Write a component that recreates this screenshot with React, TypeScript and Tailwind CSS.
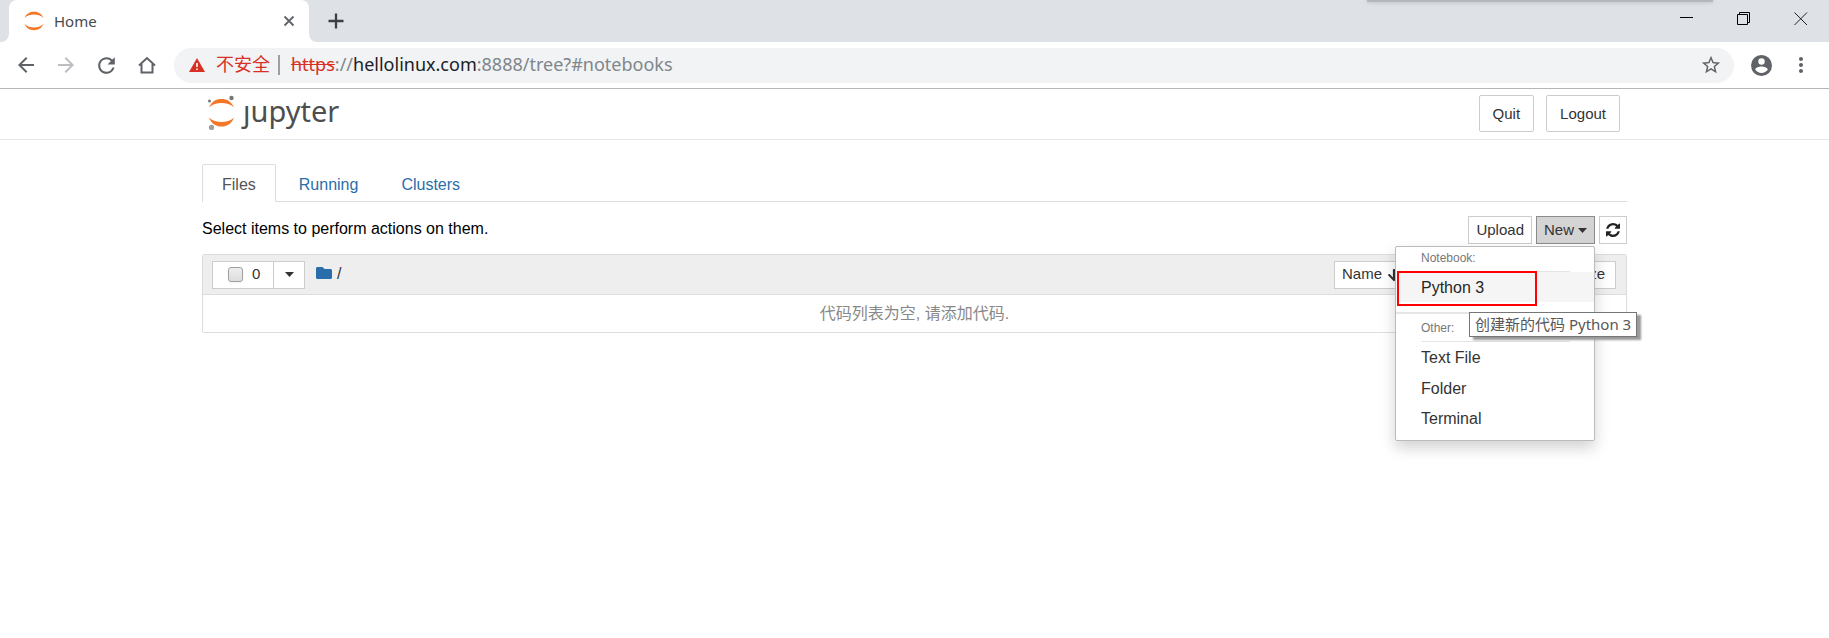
import type { ReactNode } from "react";
import { FaArrowDown, FaFolder } from "react-icons/fa";
import {
  MdArrowBack,
  MdArrowForward,
  MdMoreVert,
  MdRefresh,
  MdStarBorder,
} from "react-icons/md";

const uiFont = "font-['Noto_Sans','Noto_Sans_CJK_SC',sans-serif]";

function TabStrip() {
  return (
    <div className="relative flex h-[42px] items-center overflow-hidden bg-[#dee1e6] pl-[9px]">
      {/* Active tab */}
      <div className="relative flex h-full w-[300px] items-center rounded-t-lg bg-white pl-[15px] pr-3">
        <svg className="absolute bottom-0 -left-2 size-2" viewBox="0 0 8 8" aria-hidden="true">
          <path d="M8 0v8H0a8 8 0 0 0 8-8z" fill="#fff" />
        </svg>
        <svg className="absolute bottom-0 -right-2 size-2" viewBox="0 0 8 8" aria-hidden="true">
          <path d="M0 0v8h8a8 8 0 0 1-8-8z" fill="#fff" />
        </svg>
        <svg className="size-5" viewBox="0 0 20 20" fill="#f37726" aria-hidden="true">
          <path d="M.5 7C2.500 2.500 6 .8 10 .8S17.500 2.500 19.500 7C16.800 4.500 13.500 3.600 10 3.600S3.200 4.500.5 7z" />
          <path d="M.5 13C2.500 17.500 6 19.200 10 19.200s7.500-1.700 9.500-6.200c-2.700 2.500-6 3.400-9.500 3.400S3.200 15.500.5 13z" />
        </svg>
        <span className="ml-2.5 flex-1 text-[15px] text-[#45494d]">Home</span>
        <button aria-label="Close tab" className="flex size-4 items-center justify-center">
          <svg className="size-3" viewBox="0 0 12 12" stroke="#5f6368" strokeWidth="1.800" aria-hidden="true">
            <path d="M1.500 1.500l9 9M10.500 1.500l-9 9" />
          </svg>
        </button>
      </div>
      <button aria-label="New tab" className="ml-[19px] flex size-4 items-center justify-center">
        <svg className="size-4" viewBox="0 0 16 16" stroke="#3c4043" strokeWidth="2.300" aria-hidden="true">
          <path d="M8 .5v15M.5 8h15" />
        </svg>
      </button>

      {/* Window controls */}
      <div className="mr-[21px] mb-1 ml-auto flex items-center gap-[43px]">
        <button aria-label="Minimize">
          <svg className="block size-3.5" viewBox="0 0 14 14" stroke="#000" aria-hidden="true">
            <path d="M0 5.500h13" />
          </svg>
        </button>
        <button aria-label="Restore">
          <svg className="block size-3.5" viewBox="0 0 14 14" fill="none" stroke="#000" aria-hidden="true">
            <path d="M.5 2.500h10v10H.5zM2.500 2.500v-2h10v10h-2" />
          </svg>
        </button>
        <button aria-label="Close">
          <svg className="block size-3.5" viewBox="0 0 14 14" stroke="#222" aria-hidden="true">
            <path d="M.5.5l12.500 12.500M13 .5L.5 13" />
          </svg>
        </button>
      </div>
      <div className="absolute top-0 right-[116px] h-0.5 w-[346px] bg-[#b4b7bb] shadow-[0_0_4px_#a8abb0]" />
    </div>
  );
}

function Toolbar() {
  return (
    <div className="flex h-[47px] items-center border-b border-[#b6b6b8] bg-white pr-4 pl-3.5 text-[#5f6368]">
      <div className="flex items-center gap-4">
        <button aria-label="Back"><MdArrowBack className="size-6" /></button>
        <button aria-label="Forward" className="text-[#bcbec1]"><MdArrowForward className="size-6" /></button>
        <button aria-label="Reload"><MdRefresh className="size-[25px]" /></button>
        <button aria-label="Home page">
          <svg className="size-6" viewBox="0 0 24 24" fill="none" stroke="currentColor" strokeWidth="2" aria-hidden="true">
            <path d="M4 12.500L12 5l8 7.500M6.500 11v8.500h11V11" />
          </svg>
        </button>
      </div>
      <div className="ml-[15px] flex h-[35px] flex-1 items-center rounded-full bg-[#f1f3f4] pr-3 pl-[15px] text-[18px]">
        <svg className="h-3.5 w-4" viewBox="0 0 16 14" aria-hidden="true">
          <path d="M8 0l8 14H0z" fill="#d93025" />
          <path d="M7.200 5h1.600v4H7.200zM7.200 10.500h1.600v1.600H7.200z" fill="#fff" />
        </svg>
        <span className="mb-0.5 ml-[11px] text-[#d93025]">不安全</span>
        <span className="mr-[11px] ml-2 h-5 w-0.5 bg-[#9aa0a6]" />
        <a href="#notebooks" className="mb-0.5 text-[#80868b]">
          <span className="text-[#d93025] line-through">https</span>://
          <span className="text-[#202124]">hellolinux.com</span>:8888/tree?#notebooks
        </a>
        <button aria-label="Bookmark" className="ml-auto"><MdStarBorder className="size-[22px]" /></button>
      </div>
      <button aria-label="Profile" className="ml-[17px]">
        <svg className="size-[21px]" viewBox="0 0 21 21" aria-hidden="true">
          <circle cx="10.500" cy="10.500" r="10.500" fill="#5f6368" />
          <circle cx="10.500" cy="6.500" r="3.200" fill="#fff" />
          <path d="M4.200 14.600c0-2.100 4.200-3.200 6.300-3.200s6.300 1.100 6.300 3.200a7.600 7.600 0 0 1-12.600 0z" fill="#fff" />
        </svg>
      </button>
      <button aria-label="Menu" className="ml-[17px]"><MdMoreVert className="size-6" /></button>
    </div>
  );
}

function JupyterLogo() {
  return (
    <a href="#home" className="mb-1 flex items-center">
      <svg className="h-9 w-7" viewBox="0 0 28 36" aria-hidden="true">
        <path d="M2 13.500C4.500 7.500 9 5 14.500 5s10 2.500 12.500 8.500C23.500 10 19 9 14.500 9s-9 1-12.500 4.500z" fill="#f37726" />
        <path d="M2 23.500C4.500 30 9 32.500 14.500 32.500s10-2.500 12.500-9C23.500 27 19 28 14.500 28s-9-1-12.500-4.500z" fill="#f37726" />
        <circle cx="24.500" cy="4" r="2.200" fill="#767677" />
        <circle cx="2.500" cy="7" r="1.500" fill="#767677" />
        <circle cx="4.500" cy="33.400" r="2.600" fill="#9e9e9e" />
      </svg>
      <span className="mb-0.5 ml-2 font-['Noto_Sans',sans-serif] text-[29px] leading-8 text-[#4e4e4e]">ȷupyter</span>
    </a>
  );
}

function Caret() {
  return (
    <svg className="h-[5px] w-[9px]" viewBox="0 0 9 5" fill="#333" aria-hidden="true">
      <path d="M0 0h9L4.500 5z" />
    </svg>
  );
}

function SmallButton({ children, className = "" }: { children: ReactNode; className?: string }) {
  return (
    <button className={`flex h-7 items-center border border-[#ccc] bg-white text-[15px] text-[#333] ${className}`}>
      {children}
    </button>
  );
}

function NewMenu() {
  return (
    <div className="absolute top-[30px] right-0 z-10 w-[200px] rounded-xs border border-[#bbb] bg-white pb-1.5 shadow-[0_7px_15px_rgba(0,0,0,0.18)]">
      <div className="mr-6 ml-[25px] h-[25px] border-b border-[#e5e5e5] text-xs leading-[23px] text-[#777]">
        Notebook:
      </div>
      <div className="relative">
        <a href="#python3" className="block h-[30px] bg-[#f5f5f5] pl-[25px] leading-8 text-[#262626]">
          Python 3
        </a>
        <div className="pointer-events-none absolute -top-px left-px h-[35px] w-[140px] border-2 border-[#f00]" />
        {/* Hover tooltip */}
        <div
          role="tooltip"
          className={`absolute top-10 left-[73px] z-20 h-[25px] border border-[#767676] bg-white px-[5px] text-[15px] leading-[22px] whitespace-nowrap text-[#575757] shadow-[4px_3px_2px_#999] ${uiFont}`}
        >
          创建新的代码 Python 3
        </div>
      </div>
      <div className="mt-2.5 h-0.5 bg-[#e5e5e5]" />
      <div className="mr-6 ml-[25px] h-7 border-b border-[#e5e5e5] text-xs leading-7 text-[#777]">
        Other:
      </div>
      <a href="#text" className="block pl-[25px] leading-8">Text File</a>
      <a href="#folder" className="block pl-[25px] leading-[30px]">Folder</a>
      <a href="#terminal" className="block pl-[25px] leading-[30px]">Terminal</a>
    </div>
  );
}

function FileList() {
  return (
    <div className="mt-2.5 rounded-xs border border-[#ddd]">
      <div className="flex h-10 items-center border-b border-[#ddd] bg-[#eee] pr-2.5 pl-[9px]">
        <label className="flex h-7 w-[62px] items-center border border-[#ccc] bg-white pl-[15px] text-[15px] text-[#333]">
          <input
            type="checkbox"
            className="mr-[9px] size-[15px] appearance-none rounded-[3px] border border-[#a0a0a0] bg-linear-to-b from-[#eee] to-[#ddd] shadow-xs"
          />
          0
        </label>
        <button aria-label="Select" className="-ml-px flex h-7 w-8 items-center justify-center border border-[#ccc] bg-white">
          <Caret />
        </button>
        <a href="#root" aria-label="Root folder" className="mb-1 ml-[11px] text-[#296eaa]">
          <FaFolder className="size-4" />
        </a>
        <span className="mb-0.5 ml-[5px] text-[#333]">/</span>
        <div className="ml-auto flex gap-[117px]">
          <SmallButton className="w-[90px] pl-[7px]">
            Name <FaArrowDown className="ml-[5px] size-3.5" />
          </SmallButton>
          <SmallButton className="pr-2.5 pl-2">File size</SmallButton>
        </div>
      </div>
      <p className="text-center font-['Liberation_Sans','Noto_Sans_CJK_SC',sans-serif] leading-[37px] text-[#888]">
        代码列表为空, 请添加代码.
      </p>
    </div>
  );
}

export default function App() {
  return (
    <div className="min-h-screen bg-white">
      <div className={uiFont}>
        <TabStrip />
        <Toolbar />
      </div>

      <div className="font-['Liberation_Sans',sans-serif] text-base text-[#333]">
        <header className="border-b border-[#e7e7e7]">
          <div className="mx-auto flex h-[50px] max-w-[1425px] items-center pr-[7px] pl-[5px]">
            <JupyterLogo />
            <div className="mb-0.5 ml-auto flex gap-3 text-[15px]">
              <button className="h-[37px] rounded-xs border border-[#ccc] bg-white px-[13px] pt-0.5">Quit</button>
              <button className="h-[37px] rounded-xs border border-[#ccc] bg-white px-[13px] pt-0.5">Logout</button>
            </div>
          </div>
        </header>

        <main className="mx-auto max-w-[1425px] pt-6">
          {/* Tabs */}
          <nav className="flex h-[38px] border-b border-[#ddd] leading-[41px]">
            <a href="#files" className="-mb-px h-[38px] rounded-t-xs border border-b-0 border-[#ddd] bg-white px-[19px] leading-10 text-[#555]">
              Files
            </a>
            <a href="#running" className="ml-[3px] px-5 text-[#296eaa]">Running</a>
            <a href="#clusters" className="ml-[3px] px-5 text-[#296eaa]">Clusters</a>
          </nav>

          <div className="mt-3.5 flex items-center">
            <span className="mb-0.5 text-black">Select items to perform actions on them.</span>
            <div className="ml-auto flex gap-1">
              <SmallButton className="px-[7px]">Upload</SmallButton>
              <div className="relative">
                <button className="flex h-7 items-center gap-1 border border-[#8c8c8c] bg-[#d4d4d4] px-[7px] text-[15px]">
                  New <Caret />
                </button>
                <NewMenu />
              </div>
              <button aria-label="Refresh" className="flex h-7 w-7 items-center justify-center border border-[#ccc] bg-white">
                <svg className="size-3.5" viewBox="0 0 1536 1536" fill="#222" aria-hidden="true">
                  <path d="M1511 928q0 5-1 7-64 268-268 434.500T764 1536q-146 0-282.500-55T238 1324l-129 129q-19 19-45 19t-45-19-19-45V960q0-26 19-45t45-19h448q26 0 45 19t19 45-19 45l-137 137q71 66 161 102t187 36q134 0 250-65t186-179q11-17 53-117 8-23 30-23h192q13 0 22.500 9.500t9.500 22.500zm25-800v448q0 26-19 45t-45 19h-448q-26 0-45-19t-19-45 19-45l138-138Q969 256 768 256q-134 0-250 65T332 500q-11 17-53 117-8 23-30 23H50q-13 0-22.500-9.500T18 608v-7q65-268 270-434.500T768 0q146 0 284 55.500T1297 212l130-129q19-19 45-19t45 19 19 45z" />
                </svg>
              </button>
            </div>
          </div>

          <FileList />
        </main>
      </div>
    </div>
  );
}
